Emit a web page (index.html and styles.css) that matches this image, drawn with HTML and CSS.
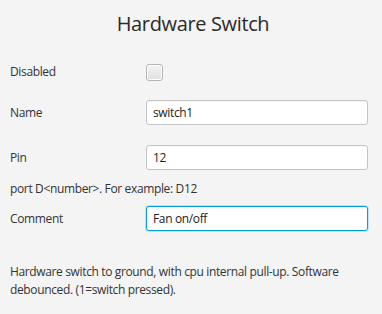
FILE: index.html
```html
<!DOCTYPE html>
<html lang="en">
  <head>
    <meta charset="UTF-8" />
    <meta name="viewport" content="width=device-width, initial-scale=1.0" />
    <title>Hardware Switch</title>
    <link rel="stylesheet" href="styles.css">
  </head>

  <body>
    <h1 class="title">Hardware Switch</h1>

    <div class="form">
      <div class="row row-check">
        <label for="disabled">Disabled</label>
        <input type="checkbox" id="disabled" class="check" />
      </div>

      <div class="row row-name">
        <label for="name">Name</label>
        <input type="text" id="name" class="field" value="switch1" />
      </div>

      <div class="row row-pin">
        <label for="pin">Pin</label>
        <input type="text" id="pin" class="field" value="12" />
      </div>

      <p class="note">port D&lt;number&gt;. For example: D12</p>

      <div class="row row-comment">
        <label for="comment">Comment</label>
        <input type="text" id="comment" class="field focused" value="Fan on/off" />
      </div>

      <p class="hint">Hardware switch to ground, with cpu internal pull-up. Software debounced. (1=switch pressed).</p>
    </div>
  </body>
</html>
```

FILE: styles.css
```css
* {
  margin: 0;
  padding: 0;
  box-sizing: border-box;
}

body {
  font-family: "Open Sans", "Noto Sans", sans-serif;
  font-size: 12px;
  letter-spacing: -0.03em;
  color: #333333;
  background: #f4f4f4;
  width: 382px;
  height: 314px;
  overflow: hidden;
}

.title {
  font-size: 20px;
  font-weight: normal;
  line-height: 24px;
  text-align: center;
  padding-top: 12px;
  padding-left: 4px;
  color: #2a2a2a;
}

.form {
  padding: 0 14px 0 10px;
}

.row {
  display: grid;
  grid-template-columns: 136px 1fr;
  align-items: center;
}

.row-check {
  margin-top: 27px;
}

.row-name {
  margin-top: 19px;
}

.row-pin {
  margin-top: 20px;
}

.row-comment {
  margin-top: 8px;
}

label {
  line-height: 18px;
}

.check {
  appearance: none;
  width: 17px;
  height: 17px;
  border: 1px solid #b5b5b5;
  border-radius: 3px;
  background: linear-gradient(#f3f3f3, #e0e0e0);
  box-shadow: inset 0 0 0 1px #ffffff;
}

.field {
  height: 25px;
  width: 100%;
  font: inherit;
  letter-spacing: inherit;
  color: #222222;
  padding: 0 6px;
  background: #ffffff;
  border: 1px solid #c4c4c4;
  border-radius: 3px;
  box-shadow: inset 0 1px 1px rgba(0, 0, 0, 0.04);
  outline: none;
}

.field.focused {
  border: 1px solid #039ed3;
  box-shadow: 0 0 0 1px #bfe3f2;
}

.note {
  margin-top: 10px;
  line-height: 18px;
}

.hint {
  margin-top: 32px;
  line-height: 18px;
}
```
